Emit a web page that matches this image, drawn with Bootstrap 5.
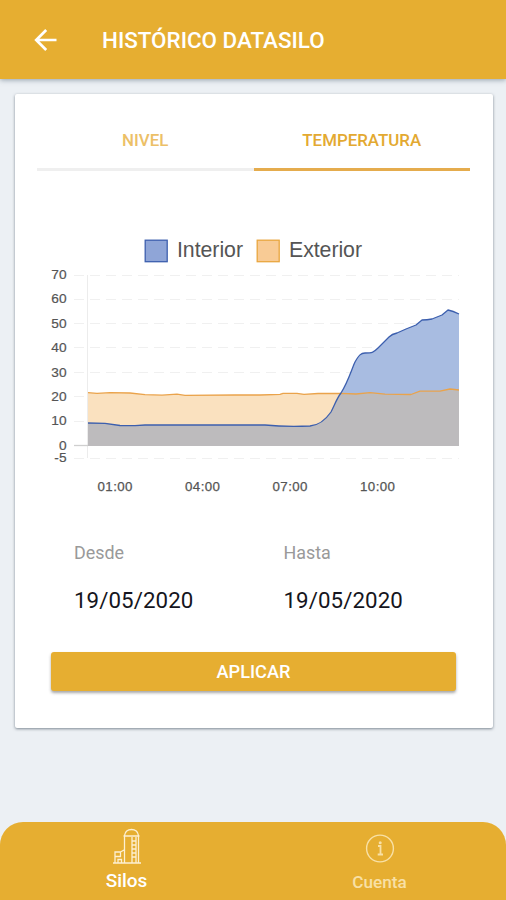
<!DOCTYPE html>
<html lang="es">
<head>
<meta charset="utf-8">
<meta name="viewport" content="width=device-width, initial-scale=1">
<title>Histórico Datasilo</title>
<link href="https://cdn.jsdelivr.net/npm/bootstrap@5.3.0/dist/css/bootstrap.min.css" rel="stylesheet">
<style>
  :root { --gold: #e6ae31; }
  body { background: #ecf0f4; font-family: Roboto, sans-serif; height: 900px; overflow: hidden; }
  .app-bar { height: 79px; background: var(--gold); box-shadow: 0 1px 5px rgba(60,80,100,.5); padding: 0 0 0 33px; }
  .app-title { font-size: 22.4px; font-weight: 500; line-height: 26px; margin-left: 44px; padding-top: 1px; }
  .panel { width: 478px; height: 634px; margin: 15px 0 0 15px; border-radius: 2px; box-shadow: 0 1px 3px rgba(50,65,80,.6); }
  .tab-row { padding: 0 23px 0 22px; height: 77px; }
  .tab-row .nav-link { height: 77px; padding: 36px 0 0; font-size: 16.9px; font-weight: 500; line-height: 20px; color: #ecc067; border-radius: 0; border-bottom: 3px solid #efefef; }
  .tab-row .nav-link.active { color: #e3a931; border-bottom-color: #e5ac4d; }
  .chart { margin-top: 59px; }
  .chart text { font-family: "Liberation Sans", Arial, sans-serif; fill: #555; }
  .dates { padding-left: 59px; margin-top: 42px; }
  .dates > div { width: 209.5px; }
  .date-label { font-size: 17.9px; line-height: 22px; color: #999; }
  .date-value { font-size: 22.3px; line-height: 26px; letter-spacing: .08px; color: #151520; margin-top: 23px; }
  .btn-apply { width: 405px; height: 39px; margin: 39px 0 0 36px; background: var(--gold); border-radius: 3px; font-size: 18.2px; font-weight: 500; line-height: 22px; box-shadow: 0 2px 3px rgba(60,60,60,.45); padding: 0; border: 0; }
  .tab-bar { height: 78px; background: var(--gold); border-radius: 23px 23px 0 0; }
  .tab-bar a { width: 253px; color: #fff; }
  .tab-bar .lbl { font-size: 19px; font-weight: 500; line-height: 22px; margin-top: 4px; }
  .tab-bar .dim { color: #f8e0a6; }
  .tab-bar .dim .lbl { font-size: 17.2px; margin-top: 5px; }
</style>
<script src="https://cdn.jsdelivr.net/npm/bootstrap@5.3.0/dist/js/bootstrap.bundle.min.js"></script>
</head>
<body class="d-flex flex-column">
  <header class="app-bar d-flex align-items-center text-white flex-shrink-0">
    <svg width="25" height="26" viewBox="0 0 25 26" fill="none" stroke="#fff" stroke-width="2.7"><path d="M23.5 13H4M13.2 3 3.2 13l10 10"/></svg>
    <h1 class="app-title mb-0">HISTÓRICO DATASILO</h1>
  </header>

  <main class="panel bg-white flex-shrink-0">
    <nav class="tab-row nav nav-fill flex-nowrap">
      <a class="nav-link w-50" href="#">NIVEL</a>
      <a class="nav-link active w-50" href="#">TEMPERATURA</a>
    </nav>

    <svg class="chart d-block" width="478" height="270" viewBox="15 230 478 270">
      <rect x="145.2" y="240.2" width="22" height="21.5" fill="#8fa5d7" stroke="#3c5fae" stroke-width="1.3"/>
      <text x="177" y="257" font-size="21.3" textLength="66">Interior</text>
      <rect x="257.2" y="240.2" width="22" height="21.5" fill="#f8cb95" stroke="#e9a63f" stroke-width="1.3"/>
      <text x="289" y="257" font-size="21.3" textLength="73">Exterior</text>

      <g stroke="#f0f0f0" stroke-width="1" stroke-dasharray="10 6">
        <path d="M74 275.5H459M74 299.5H459M74 323.5H459M74 347.5H459M74 372.5H459M74 396.5H459M74 421.5H459M74 458.5H459"/>
      </g>
      <path d="M87.5 275V458" stroke="#ececec"/>
      <path d="M74 445.5H88" stroke="#cfcfcf" stroke-width="1.3"/>

      <path fill="#fae1bf" d="M88 392.7L97 393.3L110 392.7L130 393L145 394.7L162 395.2L177 394.2L185 395.4L235 395L260 395L280 394.3L283 393.3L297 393.3L304 394.3L318 393.5L341 393.3V446H88Z"/>
      <path fill="#a8bce1" d="M341 393C348 382 351 371 355 362C359 355 361 353 365 353C372 353 373 353 378 348L389 337Q392 334 397 333L406 329L416 325L422 320Q427 320 432 319L442 315L448 310Q453 311 459 314V400H341Z"/>
      <path fill="#bdbbbd" d="M88 423L105 423.3L120 425.5L135 425.6L145 425L265 425Q285 427 310 426Q322 425 331 412C335 404 337 398 341 393L356 394L370 392.7L385 394.2L411 394.5L420 391.2L440 391.2L450 389L459 390V446H88Z"/>
      <g fill="none" stroke-width="1.3" stroke-linejoin="round">
        <path stroke="#eaa34b" d="M88 392.7L97 393.3L110 392.7L130 393L145 394.7L162 395.2L177 394.2L185 395.4L235 395L260 395L280 394.3L283 393.3L297 393.3L304 394.3L318 393.5L341 393.3L356 394L370 392.7L385 394.2L411 394.5L420 391.2L440 391.2L450 389L459 390"/>
        <path stroke="#3c5fae" d="M88 423L105 423.3L120 425.5L135 425.6L145 425L265 425Q285 427 310 426Q322 425 331 412C335 404 337 398 341 393C348 382 351 371 355 362C359 355 361 353 365 353C372 353 373 353 378 348L389 337Q392 334 397 333L406 329L416 325L422 320Q427 320 432 319L442 315L448 310Q453 311 459 314"/>
      </g>

      <g font-size="13.7" text-anchor="end" stroke="#555" stroke-width=".2">
        <text x="66.5" y="279">70</text><text x="66.5" y="303.4">60</text><text x="66.5" y="327.8">50</text><text x="66.5" y="352.2">40</text><text x="66.5" y="376.6">30</text><text x="66.5" y="401">20</text><text x="66.5" y="425.4">10</text><text x="66.5" y="449.6">0</text><text x="66.5" y="462.4">-5</text>
      </g>
      <g font-size="13.3" text-anchor="middle" stroke="#555" stroke-width=".25">
        <text x="115" y="491" textLength="35">01:00</text><text x="202.5" y="491" textLength="35">04:00</text><text x="290" y="491" textLength="35">07:00</text><text x="377.5" y="491" textLength="35">10:00</text>
      </g>
    </svg>

    <div class="dates d-flex">
      <div><div class="date-label">Desde</div><div class="date-value">19/05/2020</div></div>
      <div><div class="date-label">Hasta</div><div class="date-value">19/05/2020</div></div>
    </div>
    <button class="btn btn-apply text-white d-block" type="button">APLICAR</button>
  </main>

  <footer class="tab-bar d-flex mt-auto flex-shrink-0">
    <a href="#" class="d-flex flex-column align-items-center text-decoration-none pt-1">
      <svg width="30" height="40" viewBox="0 0 30 40" fill="none" stroke="#fdf0d2" stroke-width="1.3">
        <path d="M1 37H29M12.5 37V10.500M26.500 37V10.500M11.500 10H27.500M12.500 9.500Q13.500 3.500 19.500 3.500T26.500 9.500M20 11V37M24 11V37M20 15H24M20 19H24M20 23H24M20 27H24M20 31H24M3 37V26H8.500V30.500H3M8.500 26L12 24M6 37V33.500H9.500V37"/>
      </svg>
      <span class="lbl">Silos</span>
    </a>
    <a href="#" class="dim d-flex flex-column align-items-center text-decoration-none pt-1">
      <svg width="30" height="40" viewBox="0 0 30 40" fill="none" stroke="#f8e0a6" stroke-width="1.4">
        <circle cx="15" cy="22.5" r="13.4"/><path d="M13 20H15.500V28.500M12.700 28.500H18" stroke-width="1.8"/><circle cx="15.200" cy="16.700" r="1.500" fill="#f8e0a6" stroke="none"/>
      </svg>
      <span class="lbl">Cuenta</span>
    </a>
  </footer>
</body>
</html>
